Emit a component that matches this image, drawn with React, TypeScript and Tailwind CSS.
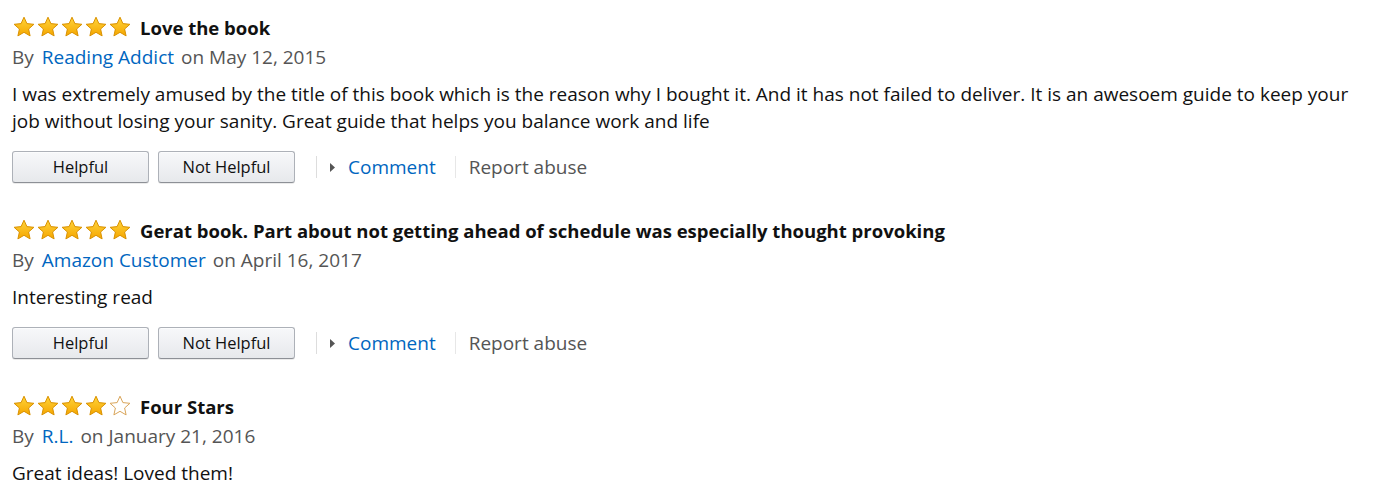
import React from "react";

const font = { fontFamily: '"Open Sans", "Noto Sans", Arial, sans-serif' };

function Star({ filled }: { filled: boolean }) {
  return (
    <svg width="24" height="22" viewBox="0 0 24 22" className="block">
      <defs>
        <linearGradient id="sg" x1="0" y1="0" x2="0" y2="1">
          <stop offset="0" stopColor="#ffd43a" />
          <stop offset="1" stopColor="#f5a600" />
        </linearGradient>
      </defs>
      <path
        d="M12 1.2 L14.9 7.6 L21.9 8.3 L16.6 13 L18.1 19.9 L12 16.3 L5.9 19.9 L7.4 13 L2.1 8.3 L9.1 7.6 Z"
        fill={filled ? "url(#sg)" : "#ffffff"}
        stroke={filled ? "#d99100" : "#d9a55a"}
        strokeWidth="1"
        strokeLinejoin="round"
      />
    </svg>
  );
}

function Stars({ n }: { n: number }) {
  return (
    <div className="flex items-center">
      {[0, 1, 2, 3, 4].map((i) => (
        <Star key={i} filled={i < n} />
      ))}
    </div>
  );
}

function Btn({ label }: { label: string }) {
  return (
    <button
      className="w-[137px] h-[32px] rounded-[3px] border border-[#adb1b8] border-b-[#8d9096] bg-gradient-to-b from-[#f7f8fa] to-[#e7e9ec] text-[16.5px] text-[#111] shadow-[inset_0_1px_0_rgba(255,255,255,0.6),0_1px_0_rgba(0,0,0,0.08)]"
      style={font}
    >
      {label}
    </button>
  );
}

type Review = {
  stars: number;
  title: string;
  author: string;
  date: string;
  body: string[];
  actions: boolean;
};

const reviews: Review[] = [
  {
    stars: 5,
    title: "Love the book",
    author: "Reading Addict",
    date: "May 12, 2015",
    body: [
      "I was extremely amused by the title of this book which is the reason why I bought it. And it has not failed to deliver. It is an awesoem guide to keep your",
      "job without losing your sanity. Great guide that helps you balance work and life",
    ],
    actions: true,
  },
  {
    stars: 5,
    title: "Gerat book. Part about not getting ahead of schedule was especially thought provoking",
    author: "Amazon Customer",
    date: "April 16, 2017",
    body: ["Interesting read"],
    actions: true,
  },
  {
    stars: 4,
    title: "Four Stars",
    author: "R.L.",
    date: "January 21, 2016",
    body: ["Great ideas! Loved them!"],
    actions: false,
  },
];

export default function App() {
  return (
    <div className="w-[1390px] h-[491px] bg-white overflow-hidden pl-[12px] pt-[13px]" style={font}>
      {reviews.map((r, idx) => (
        <div key={idx} className={idx === 0 ? "" : "mt-[33px]"}>
          <div className="h-[30px] flex items-center">
            <div className="-mt-[3px]">
              <Stars n={r.stars} />
            </div>
            <span className="ml-[8px] text-[18.5px] font-bold text-[#111]">{r.title}</span>
          </div>
          <div className="h-[29px] flex items-center text-[19px] text-[#555]">
            <span>By</span>
            <span className="ml-[8px] text-[#0066c0]">{r.author}</span>
            <span className="ml-[7px]">on {r.date}</span>
          </div>
          <div className="mt-[9px] text-[19px] leading-[27px] text-[#111]">
            {r.body.map((l, i) => (
              <div key={i} className="whitespace-nowrap">{l}</div>
            ))}
          </div>
          {r.actions && (
            <div className="mt-[16px] h-[32px] flex items-center">
              <Btn label="Helpful" />
              <div className="ml-[9px]">
                <Btn label="Not Helpful" />
              </div>
              <div className="ml-[21px] w-px h-[22px] bg-[#dddddd]" />
              <svg width="6" height="9" viewBox="0 0 6 9" className="ml-[13px]">
                <path d="M0 0 L5 4.5 L0 9 Z" fill="#555" />
              </svg>
              <span className="ml-[12px] text-[19px] text-[#0066c0]">Comment</span>
              <div className="ml-[19px] w-px h-[22px] bg-[#e7e7e7]" />
              <span className="ml-[13px] text-[19px] text-[#555]">Report abuse</span>
            </div>
          )}
        </div>
      ))}
    </div>
  );
}
